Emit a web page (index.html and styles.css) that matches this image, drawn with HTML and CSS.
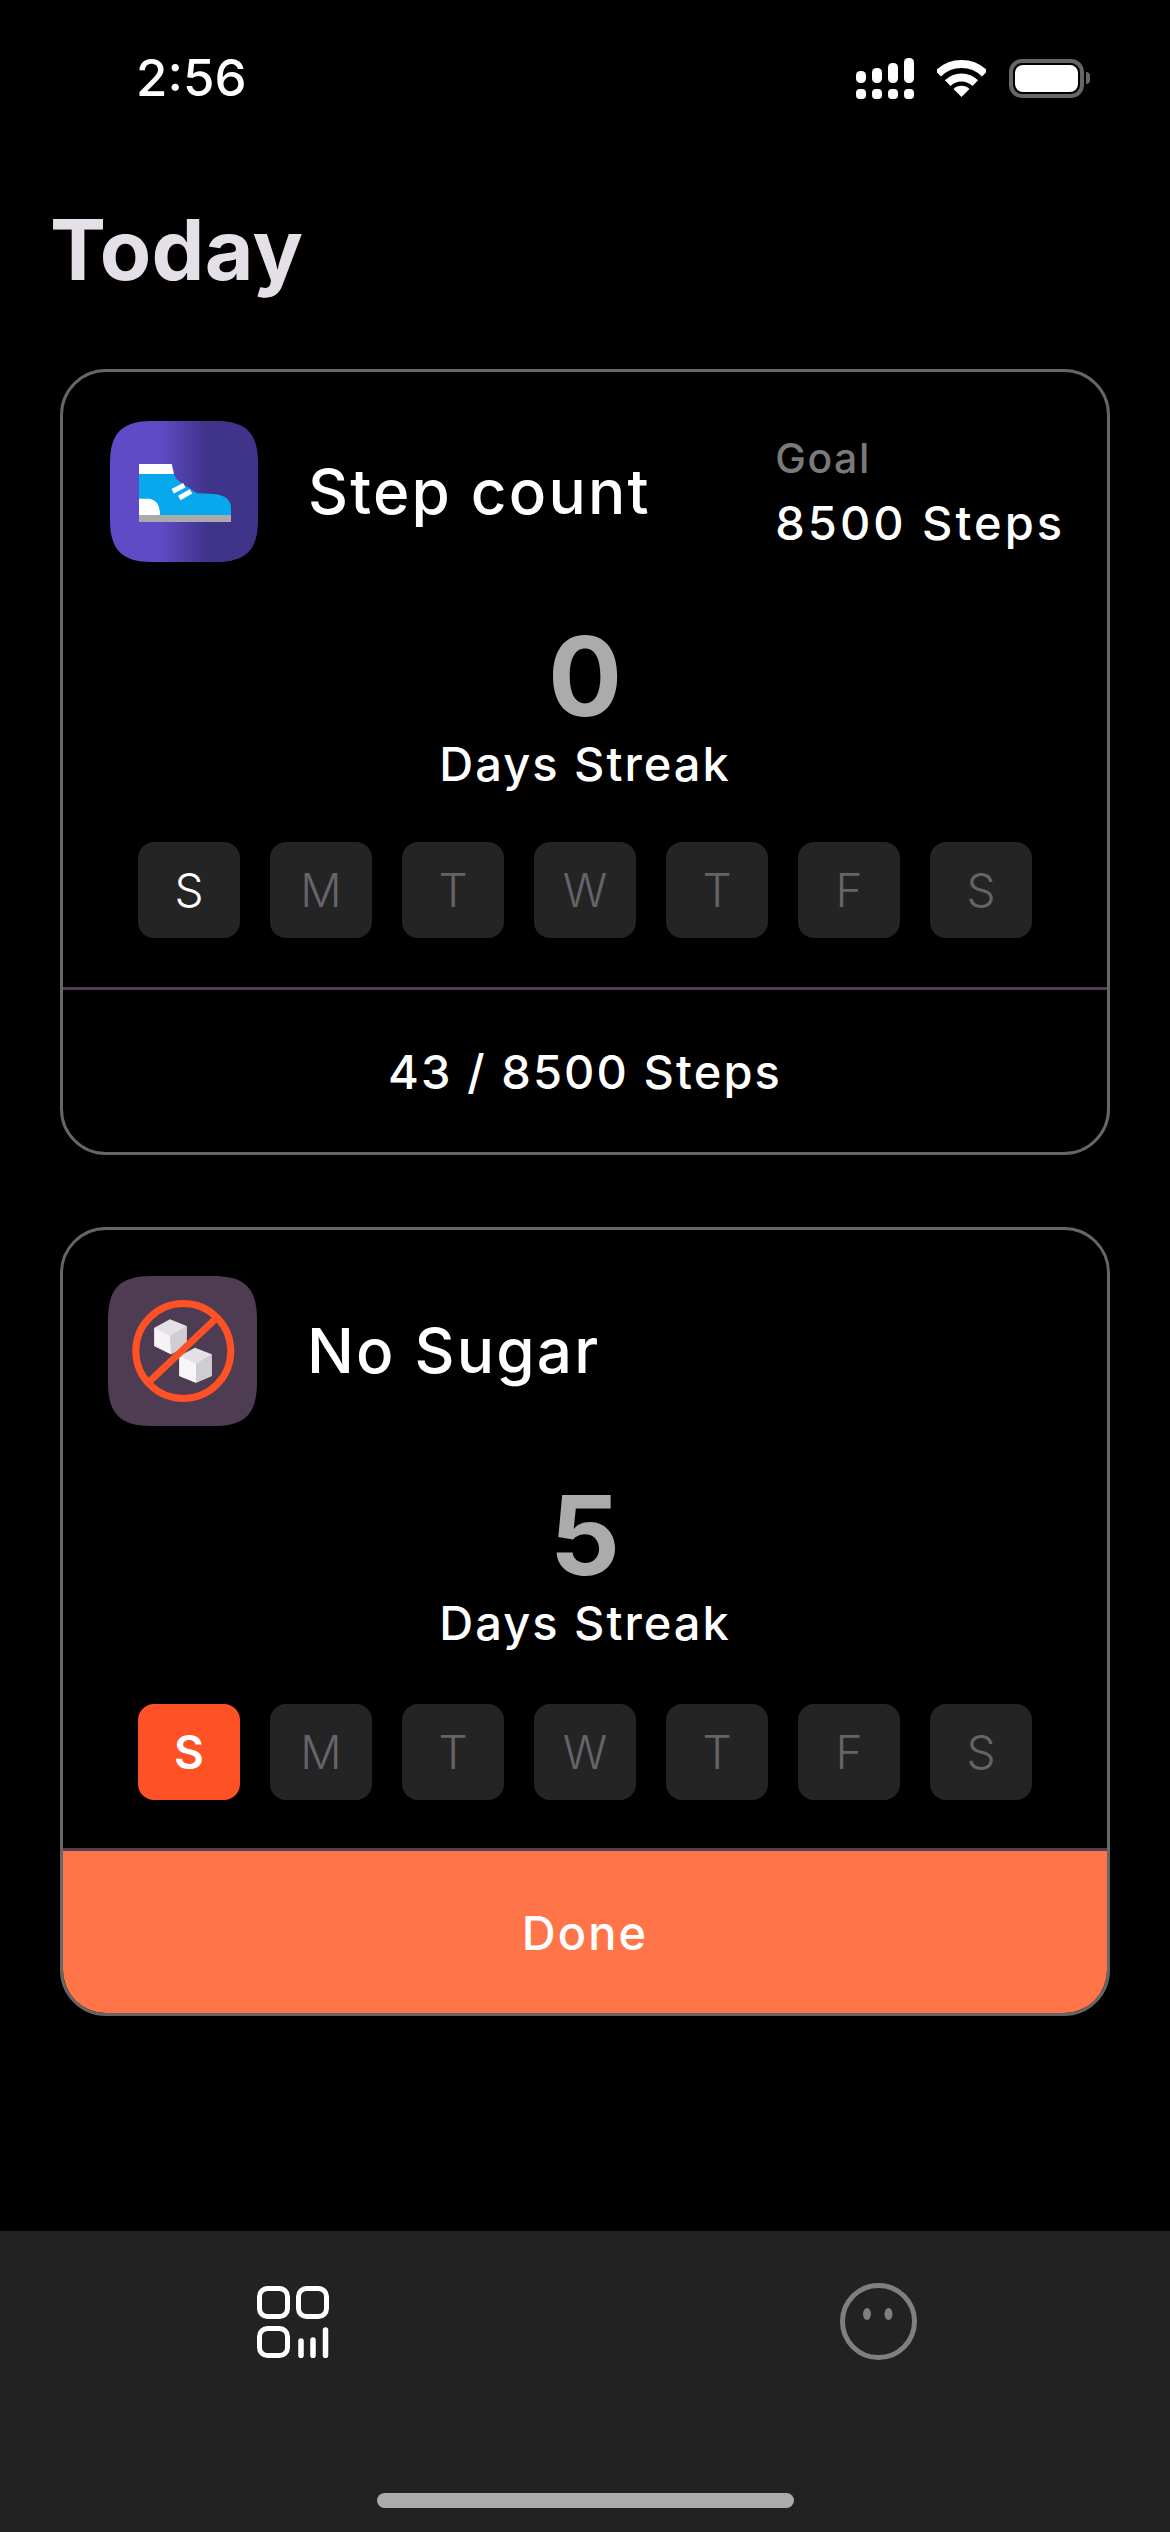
FILE: index.html
```html
<!DOCTYPE html>
<html lang="en">
<head>
<meta charset="utf-8">
<title>Today</title>
<link rel="stylesheet" href="styles.css">
</head>
<body>
<div class="phone">
  <header class="status">
    <span class="time">2:56</span>
    <div class="status-icons">
      <svg class="signal" viewBox="0 0 58 41" width="58" height="41" fill="#fff">
        <rect x="0" y="13" width="10" height="12" rx="4.5"/><rect x="16" y="10" width="10" height="15" rx="4.5"/><rect x="32" y="5" width="10" height="20" rx="4.5"/><rect x="48" y="0" width="10" height="25" rx="4.5"/>
        <rect x="0" y="31" width="10" height="10" rx="4"/><rect x="16" y="31" width="10" height="10" rx="4"/><rect x="32" y="31" width="10" height="10" rx="4"/><rect x="48" y="31" width="10" height="10" rx="4"/>
      </svg>
      <svg class="wifi" viewBox="0 0 49 37" width="49" height="37" fill="none" stroke="#fff" stroke-width="8">
        <path d="M1.2 13.7A33 33 0 0 1 47.8 13.7"/>
        <path d="M10.7 23.2A19.5 19.5 0 0 1 38.3 23.2"/>
        <path d="M24.5 37L16.5 29A11.3 11.3 0 0 1 32.5 29Z" fill="#fff" stroke="none"/>
      </svg>
      <div class="battery"><div class="battery-fill"></div></div>
    </div>
  </header>
  <h1 class="title">Today</h1>
  <main class="cards">
    <section class="card">
      <div class="card-head">
        <svg class="app-icon shoe" viewBox="0 0 148 141" width="148" height="141">
          <defs><linearGradient id="shoeBg" x1="0" x2="1" y1="0" y2="0"><stop offset=".34" stop-color="#5E4BC5"/><stop offset=".66" stop-color="#40338A"/></linearGradient></defs>
          <path d="M42 0H106C136 0 148 12 148 42V99C148 129 136 141 106 141H42C12 141 0 129 0 99V42C0 12 12 0 42 0Z" fill="url(#shoeBg)"/>
          <path d="M29 43H61.7L64 53H29Z" fill="#fff"/>
          <path d="M29 53H63.3L67.3 59L86.7 72.3L105 73Q121 75 121 87.3V94H29Z" fill="#08A9EC"/>
          <path d="M29 77.7H40Q50 80 50 94H29Z" fill="#fff"/>
          <rect x="29" y="94" width="92" height="7" fill="#ABABAB"/>
          <path d="M62.7 70.3L74.3 64.3M69.3 77L81 70.3" stroke="#fff" stroke-width="5" fill="none"/>
        </svg>
        <h2 class="habit">Step count</h2>
        <div class="goal"><span class="goal-label">Goal</span><span class="goal-value">8500 Steps</span></div>
      </div>
      <div class="streak"><span class="streak-num">0</span><span class="streak-label">Days Streak</span></div>
      <div class="days">
        <span class="day today">S</span><span class="day">M</span><span class="day">T</span><span class="day">W</span><span class="day">T</span><span class="day">F</span><span class="day">S</span>
      </div>
      <div class="foot">43 / 8500 Steps</div>
    </section>
    <section class="card card-sugar">
      <div class="card-head">
        <svg class="app-icon" viewBox="0 0 149 150" width="149" height="150">
          <path d="M44 0H105C137 0 149 12 149 44V106C149 138 137 150 105 150H44C12 150 0 138 0 106V44C0 12 12 0 44 0Z" fill="#4E3D52"/>
          <path d="M62 43.3L78.7 50V70L63 78.3L46.3 70V51.7Z" fill="#E5E0E8"/><path d="M46.3 51.7L62 60L63 78.3L46.3 70Z" fill="#F4F3F5"/><path d="M62 60L78.7 50V70L63 78.3Z" fill="#CFCDD2"/>
          <path d="M87 71.7L103.7 78.3V100L88 106.7L71.3 100V80Z" fill="#E5E0E8"/><path d="M71.3 80L88 87.7V106.7L71.3 100Z" fill="#F6F5F7"/><path d="M88 87.7L103.7 78.3V100L88 106.7Z" fill="#CFCDD2"/>
          <circle cx="75.3" cy="75" r="47.5" fill="none" stroke="#FF5126" stroke-width="7"/>
          <path d="M42 105L108.7 41.7" stroke="#FF5126" stroke-width="7"/>
        </svg>
        <h2 class="habit">No Sugar</h2>
      </div>
      <div class="streak"><span class="streak-num">5</span><span class="streak-label">Days Streak</span></div>
      <div class="days">
        <span class="day done">S</span><span class="day">M</span><span class="day">T</span><span class="day">W</span><span class="day">T</span><span class="day">F</span><span class="day">S</span>
      </div>
      <div class="foot foot-done">Done</div>
    </section>
  </main>
  <nav class="tabbar">
    <div class="tabs">
      <svg viewBox="0 0 72 72" width="72" height="72" fill="none" stroke="#fff" stroke-width="5">
        <rect x="2.5" y="2.5" width="28" height="28" rx="8"/><rect x="41.5" y="2.5" width="28" height="28" rx="8"/><rect x="2.5" y="42.5" width="28" height="27" rx="8"/>
        <path d="M44.5 55V69.5M56.5 54V69.5M69 44V69.5" stroke-width="5.5" stroke-linecap="round" transform="translate(-.5 0)"/>
      </svg>
      <svg class="face" viewBox="0 0 77 77" width="77" height="77" fill="none">
        <circle cx="38.5" cy="38.5" r="36" stroke="#7F7F7F" stroke-width="5"/>
        <ellipse cx="27" cy="31" rx="4" ry="6" fill="#7F7F7F"/><ellipse cx="48.5" cy="31" rx="4" ry="6" fill="#7F7F7F"/>
      </svg>
    </div>
    <div class="home-bar"></div>
  </nav>
</div>
</body>
</html>
```
FILE: styles.css
```css
* { box-sizing: border-box; }
html, body { margin: 0; background: #000; }
.phone {
  width: 1170px; height: 2532px; background: #000; color: #fff;
  display: flex; flex-direction: column; overflow: hidden;
  font-family: Inter, "Liberation Sans", sans-serif;
}
.status {
  height: 156px; flex: none; display: flex; align-items: center;
  justify-content: space-between; padding: 0 86px 0 136px;
}
.time { font-size: 51px; font-weight: 500; line-height: 60px; }
.status-icons { display: flex; align-items: center; gap: 23px; }
.signal, .wifi { display: block; }
.battery {
  width: 75px; height: 39px; border: 4px solid #666; border-radius: 13px;
  padding: 2px; position: relative;
}
.battery::after {
  content: ""; position: absolute; left: 73px; top: 9px; width: 4px; height: 12px;
  background: #666; border-radius: 0 6px 6px 0;
}
.battery-fill { width: 100%; height: 100%; background: #fff; border-radius: 8px; }
.title {
  margin: 44px 0 0; padding-left: 50px; height: 169px;
  font-size: 84px; line-height: 100px; font-weight: 700; letter-spacing: .3px; color: #E5E0E8;
}
.cards { display: flex; flex-direction: column; gap: 72px; padding: 0 60px; }
.card {
  height: 786px; border: 3px solid #666; border-radius: 46px; overflow: hidden;
  display: flex; flex-direction: column;
}
.card-sugar { height: 789px; }
.card-head { display: flex; align-items: center; padding: 49px 42px 0 47px; }
.card-sugar .card-head { padding-left: 45px; padding-top: 46px; }
.app-icon { display: block; flex: none; }
.habit {
  margin: 0 0 0 50px; flex: 1; font-size: 62px; line-height: 72px;
  font-weight: 500; letter-spacing: 2.2px;
}
.goal { display: flex; flex-direction: column; }
.goal-label { font-size: 41px; line-height: 56px; margin-bottom: 6px; font-weight: 500; color: #7A7A7A; letter-spacing: 1.5px; }
.goal-value { font-size: 47px; line-height: 62px; font-weight: 500; letter-spacing: 3px; }
.streak { display: flex; flex-direction: column; align-items: center; margin-top: 55px; }
.card-sugar .streak { margin-top: 50px; }
.streak-num { font-size: 110px; line-height: 119px; font-weight: 700; color: #ABABAB; }
.streak-label { font-size: 47px; line-height: 56px; font-weight: 500; letter-spacing: 2px; }
.days { display: flex; justify-content: center; gap: 30px; margin-top: 50px; }
.card-sugar .days { margin-top: 53px; }
.day {
  width: 102px; height: 96px; border-radius: 16px; background: #242424; color: #66636A;
  display: flex; align-items: center; justify-content: center;
  font-size: 46px; font-weight: 300;
}
.day.today { color: #fff; }
.day.done { background: #FF5126; color: #fff; font-weight: 600; }
.foot {
  margin-top: auto; height: 165px; border-top: 3px solid #4F3F55;
  display: flex; align-items: center; justify-content: center;
  font-size: 47px; font-weight: 500; letter-spacing: 2.1px;
}
.foot-done { background: #FF7549; }
.tabbar { margin-top: auto; height: 301px; background: #222; position: relative; padding-top: 52px; }
.tabs { display: flex; align-items: center; padding: 0 253px 0 257px; justify-content: space-between; }
.home-bar {
  position: absolute; left: 377px; top: 262px; width: 417px; height: 15px;
  background: #ABABAB; border-radius: 8px;
}
```
